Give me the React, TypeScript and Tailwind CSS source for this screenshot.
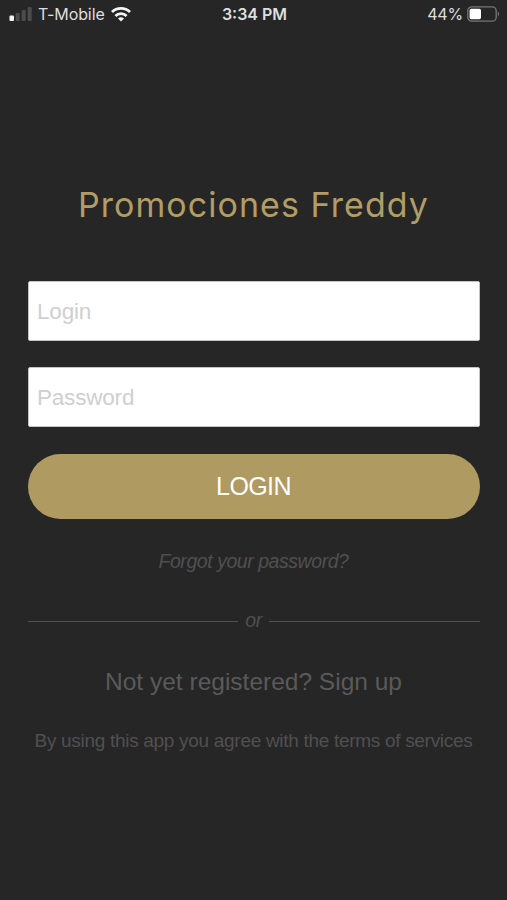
import { useState } from "react";

const SignalIcon = () => (
  <svg width="24" height="16" viewBox="0 0 24 16">
    <rect x="0.5" y="9.5" width="4.5" height="5.5" rx="1" fill="#f4f4f4" />
    <rect x="6.7" y="7" width="4" height="8" rx="1" fill="#4c4c4c" />
    <rect x="12.7" y="4" width="4" height="11" rx="1" fill="#4c4c4c" />
    <rect x="18.7" y="1" width="4" height="14" rx="1" fill="#4c4c4c" />
  </svg>
);

const WifiIcon = () => (
  <svg width="20" height="15" viewBox="0 0 20 15" fill="none" stroke="#f4f4f4" strokeWidth="2.8">
    <path d="M1 5.1C6 0.2 14 0.2 19 5.1" />
    <path d="M4.4 8.9C7.6 5.8 12.4 5.8 15.6 8.9" />
    <path d="M10 14.6L7 11.6C8.8 9.9 11.2 9.9 13 11.6Z" fill="#f4f4f4" stroke="none" />
  </svg>
);

const BatteryIcon = () => (
  <svg width="33" height="16" viewBox="0 0 33 16">
    <rect x="0.8" y="0.8" width="28.4" height="14.4" rx="4" fill="none" stroke="#777777" strokeWidth="1.3" />
    <rect x="2.6" y="2.8" width="11.4" height="10.4" rx="1.6" fill="#ffffff" />
    <path d="M30.8 5.6C32.6 6.4 32.6 9.6 30.8 10.4Z" fill="#777777" />
  </svg>
);

const StatusBar = () => {
  return (
    <div className="grid grid-cols-3 items-center h-[28px] pl-[9px] pr-[7px] font-['Inter',sans-serif] text-[16px] text-[#dedede]">
      <div className="flex items-center">
        <SignalIcon />
        <span className="ml-[5px] w-[68px] whitespace-nowrap tracking-[-0.1px]">T-Mobile</span>
        <span className="ml-[5px]"><WifiIcon /></span>
      </div>
      <div className="text-center font-semibold">3:34 PM</div>
      <div className="flex items-center justify-end gap-[4px]">
        <span className="tracking-[-0.2px]">44%</span>
        <BatteryIcon />
      </div>
    </div>
  );
};

const Field = ({ type, placeholder }: { type: string; placeholder: string }) => {
  const [value, setValue] = useState("");

  return (
    <input
      type={type}
      placeholder={placeholder}
      value={value}
      onChange={(e) => setValue(e.target.value)}
      className="block w-full h-[60px] px-[8.5px] pt-[2px] bg-white border border-[#c4c4c4] rounded-[2px] text-[22.5px] tracking-[-0.2px] text-gray-800 placeholder:text-[#cfcfcf] outline-none"
    />
  );
};

export default function App() {
  return (
    <div className="min-h-screen bg-[#262626] font-['Liberation_Sans',sans-serif]">
      <StatusBar />
      <div className="px-[27.5px] pt-[152px] flex flex-col">
        <h1 className="h-[50px] leading-[50px] text-center whitespace-nowrap text-[34px] tracking-[1.05px] text-[#b19d67] font-['Inter',sans-serif]">
          Promociones Freddy
        </h1>

        <form className="mt-[51px] flex flex-col" onSubmit={(e) => e.preventDefault()}>
          <div className="flex flex-col gap-[26px]">
            <Field type="text" placeholder="Login" />
            <Field type="password" placeholder="Password" />
          </div>
          <button className="mt-[27px] h-[65px] rounded-full bg-[#af9a62] text-[25px] tracking-[-0.6px] text-white">
            LOGIN
          </button>
        </form>

        <a className="mt-[29px] h-[26px] leading-[26px] text-center text-[19.5px] tracking-[-0.45px] italic text-[#505050]">
          Forgot your password?
        </a>

        <div className="mt-[33px] h-[26px] flex items-center gap-[6px] text-[#505050]">
          <div className="flex-1 h-[1.5px] mt-[3px] bg-[#505050]" />
          <span className="w-[19px] text-center text-[19.5px] leading-[26px] tracking-[-0.3px] italic">or</span>
          <div className="flex-1 h-[1.5px] mt-[3px] bg-[#505050]" />
        </div>

        <a className="mt-[32px] h-[34px] leading-[34px] text-center text-[24.5px] whitespace-nowrap text-[#5a5a5a]">
          Not yet registered? Sign up
        </a>

        <p className="mt-[29px] h-[26px] leading-[26px] text-center text-[19px] tracking-[-0.3px] whitespace-nowrap text-[#505050]">
          By using this app you agree with the terms of services
        </p>
      </div>
    </div>
  );
}
